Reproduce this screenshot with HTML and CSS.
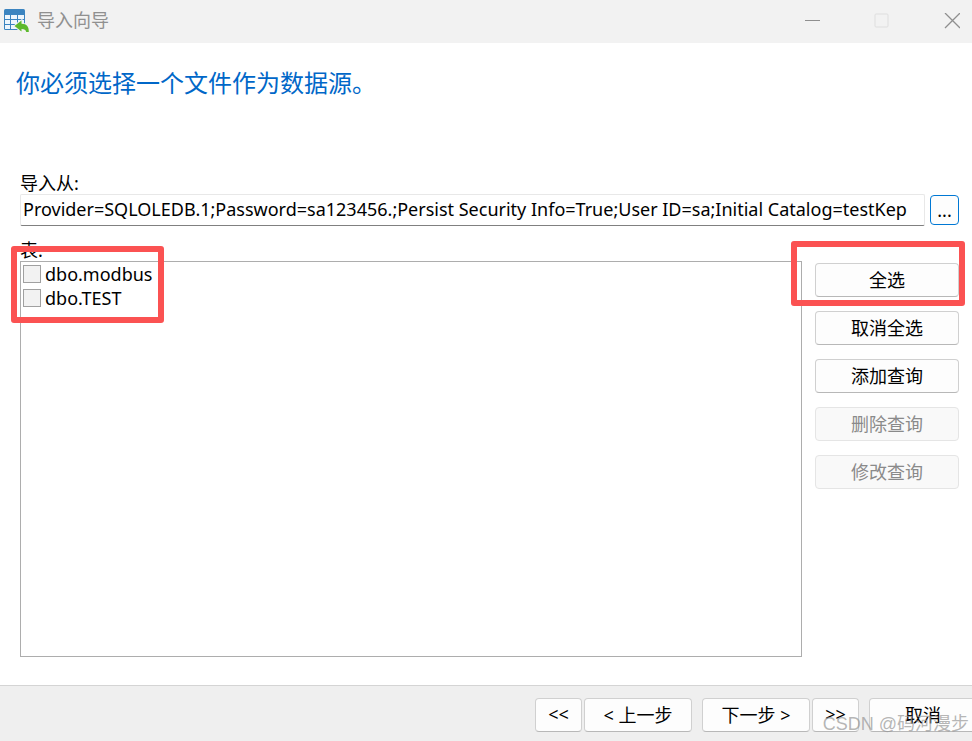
FILE: index.html
```html
<!DOCTYPE html>
<html lang="zh-CN">
<head>
    <meta charset="UTF-8">
    <meta name="viewport" content="width=device-width, initial-scale=1.0">
    <title>导入向导</title>
    <link rel="stylesheet" href="styles.css">
</head>
<body>

    <div class="window">
        <header class="titlebar">
            <svg class="app-icon" width="26" height="26" viewBox="0 0 26 26">
                <rect x="0" y="1" width="21" height="21" rx="1.500" fill="#3b84c0"/>
                <path d="M1 7h5v4H1zM7 7h6v4H7zM14 7h6v4h-6zM1 12h5v4H1zM7 12h6v4H7zM14 12h6v4h-6zM1 17h5v4H1zM7 17h6v4H7zM14 17h6v4h-6z" fill="#eef6fd"/>
                <path d="M10.500 18L17.500 12.500V15.800c5.500 0 7.500 3.200 7.300 8.200h-2.600c-.5-2.200-1.700-3-4.700-3V23.500z" fill="#5cb92c" stroke="#f2f2f2" stroke-width="2" paint-order="stroke"/>
            </svg>
            <span class="title">导入向导</span>
            <div class="window-buttons">
                <button class="window-button" type="button" aria-label="最小化">
                    <svg width="16" height="16" viewBox="0 0 16 16"><path d="M1 7.500h15" stroke="#8f8f8f"/></svg>
                </button>
                <button class="window-button" type="button" aria-label="最大化" disabled>
                    <svg width="16" height="16" viewBox="0 0 16 16"><rect x="1" y="1" width="13" height="13" rx="1" fill="none" stroke="#dedede"/></svg>
                </button>
                <button class="window-button" type="button" aria-label="关闭">
                    <svg width="16" height="16" viewBox="0 0 16 16"><path d="M1 0l15 15M16 0L1 15" stroke="#8f8f8f" stroke-width="1.300"/></svg>
                </button>
            </div>
        </header>

        <main class="content">
            <h1>你必须选择一个文件作为数据源。</h1>

            <label class="field-label" for="source">导入从:</label>
            <div class="source-row">
                <input class="source-input" type="text" id="source" value="Provider=SQLOLEDB.1;Password=sa123456.;Persist Security Info=True;User ID=sa;Initial Catalog=testKep">
                <button class="browse" type="button">...</button>
            </div>

            <div class="field-label" id="tablesLabel">表:</div>
            <div class="tables-row">
                <div class="table-list" role="group" aria-labelledby="tablesLabel">
                    <label class="table-item"><input type="checkbox" name="modbus">dbo.modbus</label>
                    <label class="table-item"><input type="checkbox" name="test">dbo.TEST</label>
                    <div class="mark mark-list"></div>
                </div>
                <div class="actions">
                    <button class="button" type="button">全选</button>
                    <button class="button" type="button">取消全选</button>
                    <button class="button" type="button">添加查询</button>
                    <button class="button" type="button" disabled>删除查询</button>
                    <button class="button" type="button" disabled>修改查询</button>
                    <div class="mark mark-select"></div>
                </div>
            </div>
        </main>

        <footer class="footer">
            <button class="button short" type="button">&lt;&lt;</button>
            <button class="button wide back" type="button">&lt; 上一步</button>
            <button class="button wide" type="button">下一步 &gt;</button>
            <button class="button short last" type="button">&gt;&gt;</button>
            <button class="button wide" type="button">取消</button>
            <span class="watermark">CSDN @码河漫步</span>
        </footer>
    </div>

</body>
</html>
```
FILE: styles.css
```css
* {
    box-sizing: border-box;
}
body {
    margin: 0;
    font-family: "Noto Sans", "Noto Sans CJK SC", sans-serif;
    font-size: 18px;
    color: #000;
    background: white;
}
button, input {
    font: inherit;
    color: inherit;
}
.window {
    display: flex;
    flex-direction: column;
    min-height: 100vh;
    overflow: hidden;
}
.titlebar {
    display: flex;
    align-items: center;
    height: 43px;
    padding: 0 12px 2px 4px;
    background: #f2f2f2;
}
.app-icon {
    margin-right: 7px;
}
.title {
    color: #909090;
    line-height: 24px;
    padding-bottom: 2px;
}
.window-buttons {
    display: flex;
    gap: 54px;
    margin-left: auto;
}
.window-button {
    display: flex;
    padding: 0;
    border: none;
    background: none;
}
.content {
    flex: 1;
    display: flex;
    flex-direction: column;
    padding: 22px 13px 28px 20px;
}
h1 {
    margin: 0 0 68px -4px;
    font-size: 24px;
    font-weight: normal;
    line-height: 36px;
    color: #0067c8;
}
.field-label {
    line-height: 28px;
    height: 25px;
}
.source-row {
    display: flex;
    align-items: center;
    gap: 5px;
    margin-bottom: 10px;
}
.source-input {
    flex: 1;
    min-width: 0;
    height: 32px;
    padding: 0 2px 2px;
    border: 1px solid #e8e8e8;
    border-bottom-color: #808080;
    border-radius: 2px;
    background: white;
}
.browse {
    width: 29px;
    height: 30px;
    padding: 0;
    border: 1px solid #0078d4;
    border-radius: 4px;
    background: #fdfdfd;
    line-height: 26px;
}
.tables-row {
    flex: 1;
    display: flex;
    gap: 13px;
}
.table-list {
    position: relative;
    flex: 1;
    padding: 0 2px;
    border: 1px solid #adadad;
}
.table-item {
    display: flex;
    align-items: center;
    gap: 4px;
    line-height: 24px;
}
.table-item input {
    appearance: none;
    width: 18px;
    height: 18px;
    margin: 0;
    border: 1px solid #a0a0a0;
    background: #f2f2f2;
}
.table-item input:checked {
    background: #0078d4;
}
.actions {
    position: relative;
    display: flex;
    flex-direction: column;
    gap: 14px;
    width: 144px;
    padding-top: 2px;
}
.button {
    height: 34px;
    padding: 0 0 2px;
    border: 1px solid #d0d0d0;
    border-bottom-color: #b8b8b8;
    border-radius: 4px;
    background: #fdfdfd;
}
.button:disabled {
    color: #8a8a8a;
    border-color: #e5e5e5;
    background: #f9f9f9;
}
/* red frames around the important spots */
.mark {
    position: absolute;
    border: 6px solid #fb5252;
    border-radius: 3px;
    pointer-events: none;
}
.mark-list {
    top: -16px;
    left: -10px;
    width: 153px;
    height: 77px;
}
.mark-select {
    top: -20px;
    left: -24px;
    right: -6px;
    height: 65px;
}
.footer {
    position: relative;
    display: flex;
    justify-content: flex-end;
    gap: 2px;
    height: 56px;
    padding-top: 12px;
    margin-right: -5px;
    border-top: 1px solid #d4d4d4;
    background: #efefef;
}
.short {
    width: 47px;
}
.wide {
    width: 108px;
}
.back, .last {
    margin-right: 8px;
}
.watermark {
    position: absolute;
    right: 8px;
    bottom: 4px;
    font-family: "Liberation Sans", "Noto Sans CJK SC", sans-serif;
    line-height: 26px;
    color: rgba(150, 150, 150, 0.7);
    pointer-events: none;
}
```
